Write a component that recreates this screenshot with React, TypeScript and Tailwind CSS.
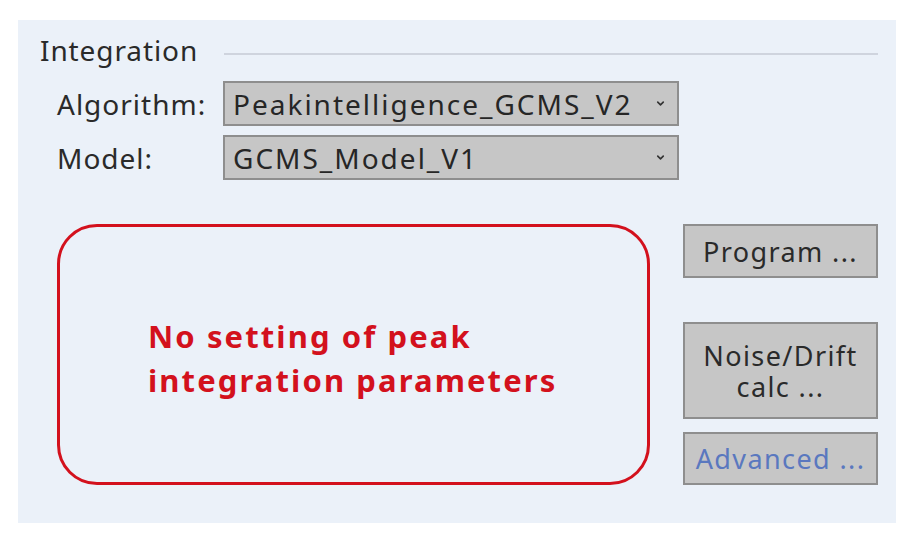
import { ChevronDown } from "lucide-react";

const Select = ({ value }: { value: string }) => {
  return (
    <div className="flex h-[45px] w-[456px] items-center justify-between border-2 border-[#8e8e8e] bg-[#c6c6c6] pl-[8px] pr-[11px]">
      <span className="text-[28px] leading-none tracking-[2px] text-[#262626]">{value}</span>
      <ChevronDown className="h-[11px] w-[11px] text-[#333]" strokeWidth={3.5} />
    </div>
  );
};

const SideButton = ({
  children,
  className,
}: {
  children: React.ReactNode;
  className: string;
}) => {
  return (
    <div
      className={`flex w-[195px] flex-col items-center justify-center border-2 border-[#8e8e8e] bg-[#c6c6c6] text-center text-[27px] leading-[31px] tracking-[1.4px] ${className}`}
    >
      {children}
    </div>
  );
};

export default function App() {
  return (
    <div
      className="h-[542px] w-[924px] bg-white pl-[18px] pt-[20px]"
      style={{ fontFamily: '"Noto Sans", "Open Sans", sans-serif' }}
    >
      <div className="flex h-[503px] w-[878px] flex-col bg-[#ebf1f9] pl-[22px] pr-[18px]">
        {/* header */}
        <div className="mt-[14px] flex items-center gap-[26px]">
          <span className="text-[28px] leading-[32px] tracking-[0.9px] text-[#2a2a2a]">Integration</span>
          <div className="mt-[7px] h-[2px] flex-1 bg-[#cfd4de]" />
        </div>

        {/* selects */}
        <div className="mt-[15px] flex flex-col gap-[9px] pl-[17px]">
          <div className="flex items-center">
            <span className="w-[166px] text-[28px] leading-none tracking-[1px] text-[#2a2a2a]">Algorithm:</span>
            <Select value="Peakintelligence_GCMS_V2" />
          </div>
          <div className="flex items-center">
            <span className="w-[166px] text-[28px] leading-none tracking-[1px] text-[#2a2a2a]">Model:</span>
            <Select value="GCMS_Model_V1" />
          </div>
        </div>

        {/* bottom area */}
        <div className="mt-[44px] flex gap-[33px] pl-[17px]">
          <div className="flex h-[261px] w-[593px] items-center rounded-[40px] border-[3px] border-[#d3111d] pl-[88px]">
            <p className="mt-[6px] text-[31px] font-bold leading-[44px] tracking-[2.1px] text-[#d3111d]">
              No setting of peak
              <br />
              integration parameters
            </p>
          </div>
          <div className="flex flex-col">
            <SideButton className="h-[54px] text-[#2a2a2a]">Program ...</SideButton>
            <SideButton className="mt-[44px] h-[97px] text-[#2a2a2a]">
              <div>Noise/Drift</div>
              <div>calc ...</div>
            </SideButton>
            <SideButton className="mt-[13px] h-[53px] text-[#5a78bf]">Advanced ...</SideButton>
          </div>
        </div>
      </div>
    </div>
  );
}
